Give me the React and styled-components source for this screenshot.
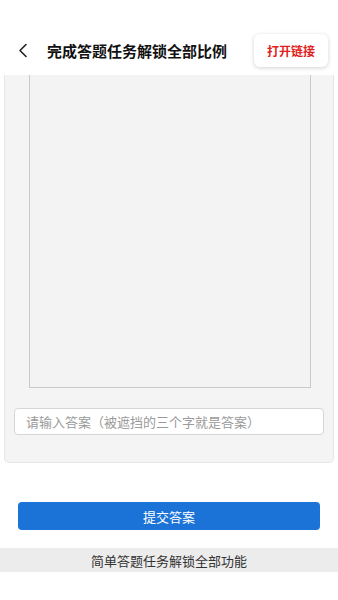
import React from "react"
import styled, { createGlobalStyle } from "styled-components"

const GlobalStyle = createGlobalStyle`
  html, body {
    margin: 0;
    padding: 0;
    background: #fff;
    font-family: "Noto Sans CJK SC", "Noto Sans", sans-serif;
  }
  * {
    box-sizing: border-box;
  }
`

const Page = styled.div`
  width: 338px;
  min-height: 600px;
  background: #fff;
  display: flex;
  flex-direction: column;
`

const Header = styled.div`
  height: 75px;
  padding: 25px 10px 0 16px;
  display: flex;
  align-items: center;
  justify-content: space-between;
  background: #fff;
`

const TitleGroup = styled.div`
  display: flex;
  align-items: center;
  gap: 18px;
`

const BackButton = styled.button`
  border: none;
  background: none;
  padding: 0;
  width: 13px;
  height: 16px;
  display: flex;
  align-items: center;
  justify-content: center;
  color: #222;
`

const Title = styled.h1`
  margin: 0;
  font-size: 15px;
  font-weight: 700;
  color: #111;
  letter-spacing: 0;
`

const LinkButton = styled.button`
  width: 74px;
  height: 33px;
  border: none;
  border-radius: 6px;
  background: #fff;
  box-shadow: 0 1px 4px rgba(0, 0, 0, 0.18);
  color: #e01e1e;
  font-family: inherit;
  font-size: 12px;
  font-weight: 700;
`

const Panel = styled.div`
  margin: 0 4px 0 4px;
  height: 388px;
  background: #f4f4f4;
  border: 1px solid #e6e6e6;
  border-top: none;
  border-radius: 0 0 5px 5px;
  padding: 0 0 0 9px;
  display: flex;
  flex-direction: column;
`

const Frame = styled.div`
  margin-left: 15px;
  width: 282px;
  height: 313px;
  border: 1px solid #c9c9c9;
  border-top: none;
  background: #f3f3f3;
`

const AnswerInput = styled.input`
  margin-top: 20px;
  width: 310px;
  height: 27px;
  border: 1px solid #d6d6d6;
  border-radius: 4px;
  background: #fff;
  padding: 0 11px;
  font-family: inherit;
  font-size: 13px;
  color: #333;
  outline: none;

  &::placeholder {
    color: #9a9a9a;
  }
`

const SubmitButton = styled.button`
  margin: 39px 18px 0 18px;
  height: 28px;
  border: none;
  border-radius: 4px;
  background: #1b73d8;
  color: #fff;
  font-family: inherit;
  font-size: 13px;
`

const Footer = styled.div`
  margin-top: 18px;
  height: 24px;
  background: #ececec;
  display: flex;
  align-items: center;
  justify-content: center;
  font-size: 13px;
  color: #333;
`

const App = () => {
  return (
    <Page>
      <GlobalStyle />
      <Header>
        <TitleGroup>
          <BackButton aria-label="back">
            <svg width="10" height="15" viewBox="0 0 10 15" fill="none">
              <path d="M8 1.5L2 7.5l6 6" stroke="currentColor" strokeWidth="1.6" strokeLinecap="round" strokeLinejoin="round" />
            </svg>
          </BackButton>
          <Title>完成答题任务解锁全部比例</Title>
        </TitleGroup>
        <LinkButton>打开链接</LinkButton>
      </Header>
      <Panel>
        <Frame />
        <AnswerInput placeholder="请输入答案（被遮挡的三个字就是答案）" />
      </Panel>
      <SubmitButton>提交答案</SubmitButton>
      <Footer>简单答题任务解锁全部功能</Footer>
    </Page>
  )
}

export default App
